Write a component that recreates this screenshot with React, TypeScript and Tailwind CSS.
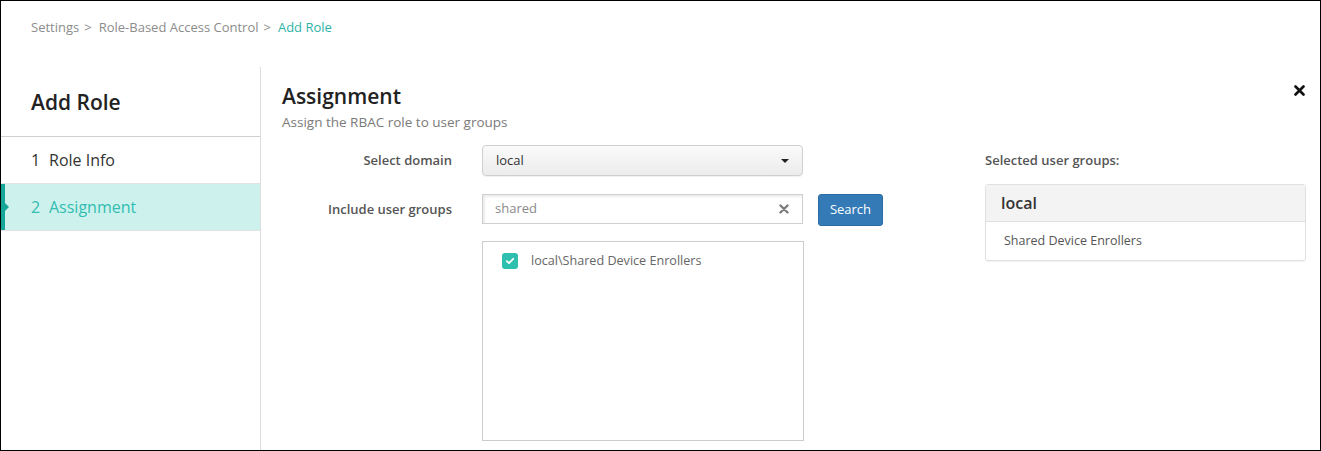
import { useState } from "react";

const font = { fontFamily: '"Open Sans", "Noto Sans", sans-serif' };

export default function App() {
  const [query, setQuery] = useState("shared");
  const [checked, setChecked] = useState(true);

  return (
    <div
      style={font}
      className="w-[1321px] h-[451px] box-border border border-black bg-white flex flex-col overflow-hidden"
    >
      {/* Breadcrumb */}
      <div className="h-[66px] flex items-start pt-[17px] pl-[30px] text-[13px] text-[#8c8c8c] gap-[5px]">
        <span>Settings</span>
        <span>&gt;</span>
        <span className="ml-[2px]">Role-Based Access Control</span>
        <span>&gt;</span>
        <span className="ml-[2px] text-[#2eb3a6]">Add Role</span>
      </div>

      <div className="flex flex-1 min-h-0">
        {/* Sidebar */}
        <div className="w-[260px] border-r border-[#dcdcdc] flex flex-col">
          <div className="h-[70px] border-b border-[#cfcfcf] pl-[30px] flex items-center pt-[2px]">
            <h2 className="text-[21px] font-semibold text-[#222]">Add Role</h2>
          </div>
          <div className="h-[47px] border-b border-[#e3e3e3] pl-[30px] flex items-center text-[16px] text-[#333]">
            <span className="w-[18px]">1</span>
            <span>Role Info</span>
          </div>
          <div className="relative h-[47px] border-b border-[#e3e3e3] bg-[#cdf2ee] pl-[30px] flex items-center text-[16px] text-[#33bdb0]">
            <span className="absolute left-0 top-0 bottom-0 w-[4px] bg-[#16a697]" />
            <span className="absolute left-[4px] top-[19px] w-0 h-0 border-y-[4px] border-y-transparent border-l-[4px] border-l-[#16a697]" />
            <span className="w-[18px]">2</span>
            <span>Assignment</span>
          </div>
        </div>

        {/* Main */}
        <div className="flex-1 pl-[21px] pr-[14px] pt-[15px]">
          <div className="flex justify-between items-start">
            <div>
              <h1 className="text-[21px] leading-[28px] font-semibold text-[#222]">Assignment</h1>
              <p className="text-[13.5px] leading-[20px] text-[#7a7a7a] mt-[2px]">
                Assign the RBAC role to user groups
              </p>
            </div>
            <button className="mt-[3px] mr-[1px] text-[#111]">
              <svg width="11" height="11" viewBox="0 0 11 11">
                <path d="M1.5 1.5 L9.5 9.5 M9.5 1.5 L1.5 9.5" stroke="currentColor" strokeWidth="2.6" strokeLinecap="round" />
              </svg>
            </button>
          </div>

          <div className="flex mt-[13px]">
            {/* Form */}
            <div className="flex flex-col">
              <div className="flex items-center h-[31px]">
                <label className="w-[170px] text-right text-[13px] font-semibold text-[#555]">Select domain</label>
                <div className="ml-[30px] w-[321px] h-[31px] rounded-[4px] border border-[#d0d0d0] bg-gradient-to-b from-[#fafafa] to-[#ececec] shadow-[0_1px_1px_rgba(0,0,0,0.06)] flex items-center justify-between pl-[13px] pr-[13px] text-[13px] text-[#333]">
                  <span>local</span>
                  <span className="w-0 h-0 border-x-[4px] border-x-transparent border-t-[4px] border-t-[#222]" />
                </div>
              </div>

              <div className="flex items-center h-[32px] mt-[18px]">
                <label className="w-[170px] text-right text-[13px] font-semibold text-[#555]">Include user groups</label>
                <div className="ml-[30px] w-[321px] h-[30px] self-start border border-[#cfcfcf] shadow-[inset_2px_2px_2px_rgba(0,0,0,0.08)] flex items-center pl-[12px] pr-[13px]">
                  <input
                    value={query}
                    onChange={(e) => setQuery(e.target.value)}
                    className="flex-1 outline-none text-[13px] text-[#8a8a8a] bg-transparent"
                    style={font}
                  />
                  <button onClick={() => setQuery("")} className="text-[#7d7d7d]">
                    <svg width="10" height="10" viewBox="0 0 10 10">
                      <path d="M1.5 1.5 L8.5 8.5 M8.5 1.5 L1.5 8.5" stroke="currentColor" strokeWidth="2.4" strokeLinecap="round" />
                    </svg>
                  </button>
                </div>
                <button className="ml-[15px] w-[65px] h-[32px] rounded-[3px] bg-[#337ab7] border border-[#2e6da4] text-white text-[13px]">
                  Search
                </button>
              </div>

              <div className="ml-[200px] mt-[15px] w-[322px] h-[200px] border border-[#cccccc] pl-[19px] pt-[10px]">
                <label className="flex items-center gap-[13px] cursor-pointer">
                  <span
                    onClick={() => setChecked(!checked)}
                    className={`w-[16px] h-[16px] rounded-[3px] flex items-center justify-center ${checked ? "bg-[#2fbfae]" : "border border-[#bbb]"}`}
                  >
                    {checked && (
                      <svg width="10" height="10" viewBox="0 0 10 10">
                        <path d="M1.8 5.2 L4 7.2 L8.2 2.8" stroke="white" strokeWidth="1.8" fill="none" strokeLinecap="round" strokeLinejoin="round" />
                      </svg>
                    )}
                  </span>
                  <span className="text-[12.6px] text-[#666]">local\Shared Device Enrollers</span>
                </label>
              </div>
            </div>

            {/* Selected groups */}
            <div className="ml-[102px] w-[321px] flex flex-col">
              <div className="h-[31px] flex items-center text-[13px] font-semibold text-[#555]">Selected user groups:</div>
              <div className="mt-[8px] rounded-[3px] border border-[#e0e0e0] shadow-[0_1px_1px_rgba(0,0,0,0.05)]">
                <div className="h-[37px] bg-[#f3f3f3] border-b border-[#e0e0e0] flex items-center pl-[15px] text-[16px] font-semibold text-[#333]">
                  local
                </div>
                <div className="h-[38px] flex items-center pl-[18px] text-[12.5px] text-[#555]">
                  Shared Device Enrollers
                </div>
              </div>
            </div>
          </div>
        </div>
      </div>
    </div>
  );
}
